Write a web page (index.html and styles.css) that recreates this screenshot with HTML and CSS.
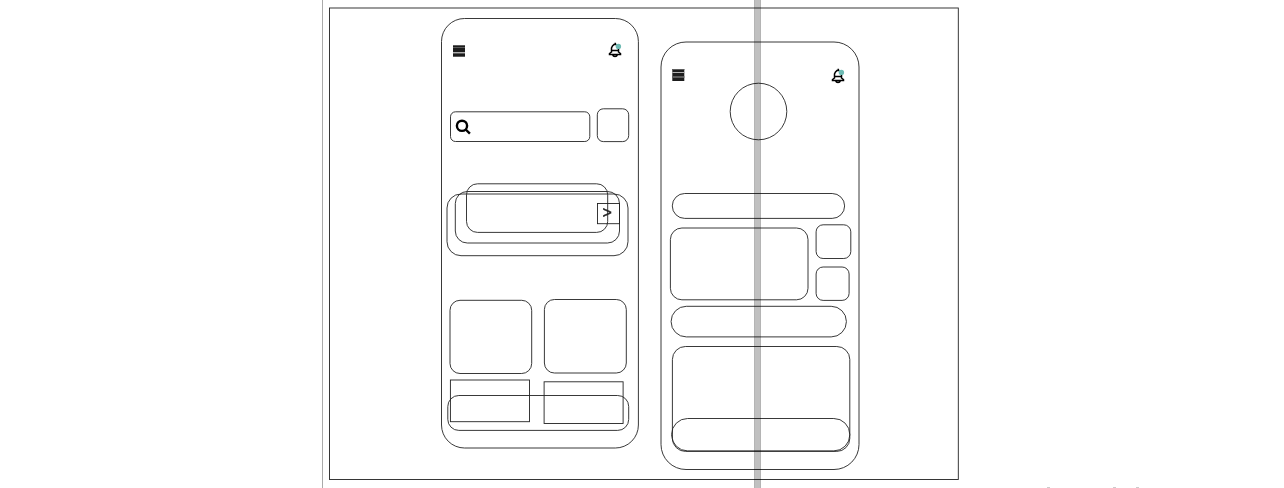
FILE: index.html
```html
<!DOCTYPE html>
<html lang="en">
<head>
<meta charset="utf-8">
<title>Wireframe canvas</title>
<link rel="stylesheet" href="styles.css">
</head>
<body>
<main class="board">
<svg class="canvas" viewBox="0 0 1284 488" width="1284" height="488">
  <defs>
    <g id="bell">
      <path class="bell-line" d="M613.500 44.500h3M614.500 43.500h1.500M611.500 52.500v-4.500l1-2 1.500-1.500M618.500 47v5.500M611 50.500h8M611.500 52l-2 1.500v1h11v-1l-2-1.500M612.500 54.500l1 1.500 1.500 .5 1.500-.5 1-1.500"/>
      <circle class="dot" cx="618.400" cy="46.400" r="2.700"/>
    </g>
  </defs>
  <rect class="guide" x="322" y="0" width="1" height="488"/>
  <rect class="line" x="329.500" y="8" width="628.800" height="471.500"/>

  <g class="phone">
    <rect class="line" x="441.500" y="18.500" width="196.900" height="429.500" rx="23"/>
    <g class="menu">
      <rect x="453" y="45" width="12" height="7"/>
      <rect x="453" y="53" width="12" height="4"/>
      <path class="menu-gap" d="M453 45.500h12M453 47.500h12M453 53.500h12M453 56.500h12"/>
      <path class="menu-split" d="M453 52.500h12"/>
    </g>
    <use href="#bell"/>
    <rect class="line" x="450.500" y="111.800" width="139.300" height="29.700" rx="5"/>
    <circle class="search" cx="462" cy="125.800" r="5.100"/>
    <path class="search" d="M465.700 129.500l4.200 4.200"/>
    <rect class="line" x="597.300" y="108.800" width="31.400" height="32.800" rx="6"/>

    <rect class="line" x="466.500" y="183.800" width="141.200" height="48.600" rx="11"/>
    <rect class="line" x="455.300" y="191.500" width="164.200" height="51.500" rx="12"/>
    <rect class="line" x="447" y="194" width="181" height="61.700" rx="14"/>
    <rect class="line" x="597.500" y="203.500" width="22" height="20.200"/>
    <text class="chevron" x="602.600" y="218">&gt;</text>

    <rect class="line" x="450" y="300.300" width="81.700" height="73.200" rx="10"/>
    <rect class="line" x="544.400" y="299.500" width="81.900" height="73.500" rx="10"/>
    <rect class="line" x="450.400" y="380" width="79.100" height="41.700"/>
    <rect class="line" x="544.100" y="381.800" width="79" height="41.700"/>
    <rect class="line" x="447.800" y="395.500" width="180.900" height="34.900" rx="11"/>
  </g>

  <g class="phone">
    <rect class="line" x="661" y="42" width="198" height="427.500" rx="25"/>
    <g class="menu">
      <rect x="672.300" y="69" width="12" height="12"/>
      <path class="menu-gap" d="M672.300 69.500h12M672.300 76.500h12M672.300 77.500h12"/>
      <path class="menu-split" d="M672.300 72.500h12"/>
    </g>
    <use href="#bell" x="223" y="26"/>
    <circle class="line" cx="758.500" cy="111.500" r="28.300"/>
    <rect class="line" x="672.300" y="193.500" width="172.300" height="24.900" rx="12.400"/>
    <rect class="line" x="670.400" y="228" width="137.600" height="71.800" rx="11.500"/>
    <rect class="line" x="816.100" y="224.800" width="34.700" height="33.700" rx="7"/>
    <rect class="line" x="816.100" y="267" width="33" height="33.400" rx="7"/>
    <rect class="line" x="671.100" y="306.300" width="175.300" height="30.600" rx="15.200"/>
    <rect class="line" x="672.400" y="346.500" width="177.400" height="104.900" rx="13"/>
    <rect class="line" x="671.600" y="418.500" width="178.200" height="32.400" rx="16"/>
  </g>

  <rect class="divider" x="754" y="0" width="7" height="488"/>
  <path class="divider-edge" d="M754.500 0v488M760.500 0v488"/>
  <path class="specks" d="M1047 487.500h3M1113 487.500h3M1136 487.500h3"/>
</svg>
</main>
</body>
</html>
```
FILE: styles.css
```css
body {
  margin: 0;
  background: #fff;
  overflow: hidden;
}

.board {
  display: flex;
  width: 1284px;
  height: 488px;
}

.canvas {
  display: block;
}

.line {
  fill: none;
  stroke: #222;
  stroke-width: 0.9;
}

.guide {
  fill: #aaa;
}

.menu {
  fill: #1c1c1c;
}

.menu-gap {
  stroke: #5c5c5c;
}

.menu-split {
  stroke: #b0b0b0;
}

.bell-line {
  fill: none;
  stroke: #000;
  stroke-width: 1.5;
}

.dot {
  fill: #6dbab3;
}

.search {
  fill: none;
  stroke: #000;
  stroke-width: 2.4;
}

.chevron {
  font: 16px "Liberation Sans", Arial, sans-serif;
  fill: #222;
  stroke: #222;
  stroke-width: 0.4;
}

.divider {
  fill: #c0c0c0;
  mix-blend-mode: multiply;
}

.divider-edge {
  stroke: rgba(0, 0, 0, 0.06);
}

.specks {
  stroke: #ccc;
}
```
